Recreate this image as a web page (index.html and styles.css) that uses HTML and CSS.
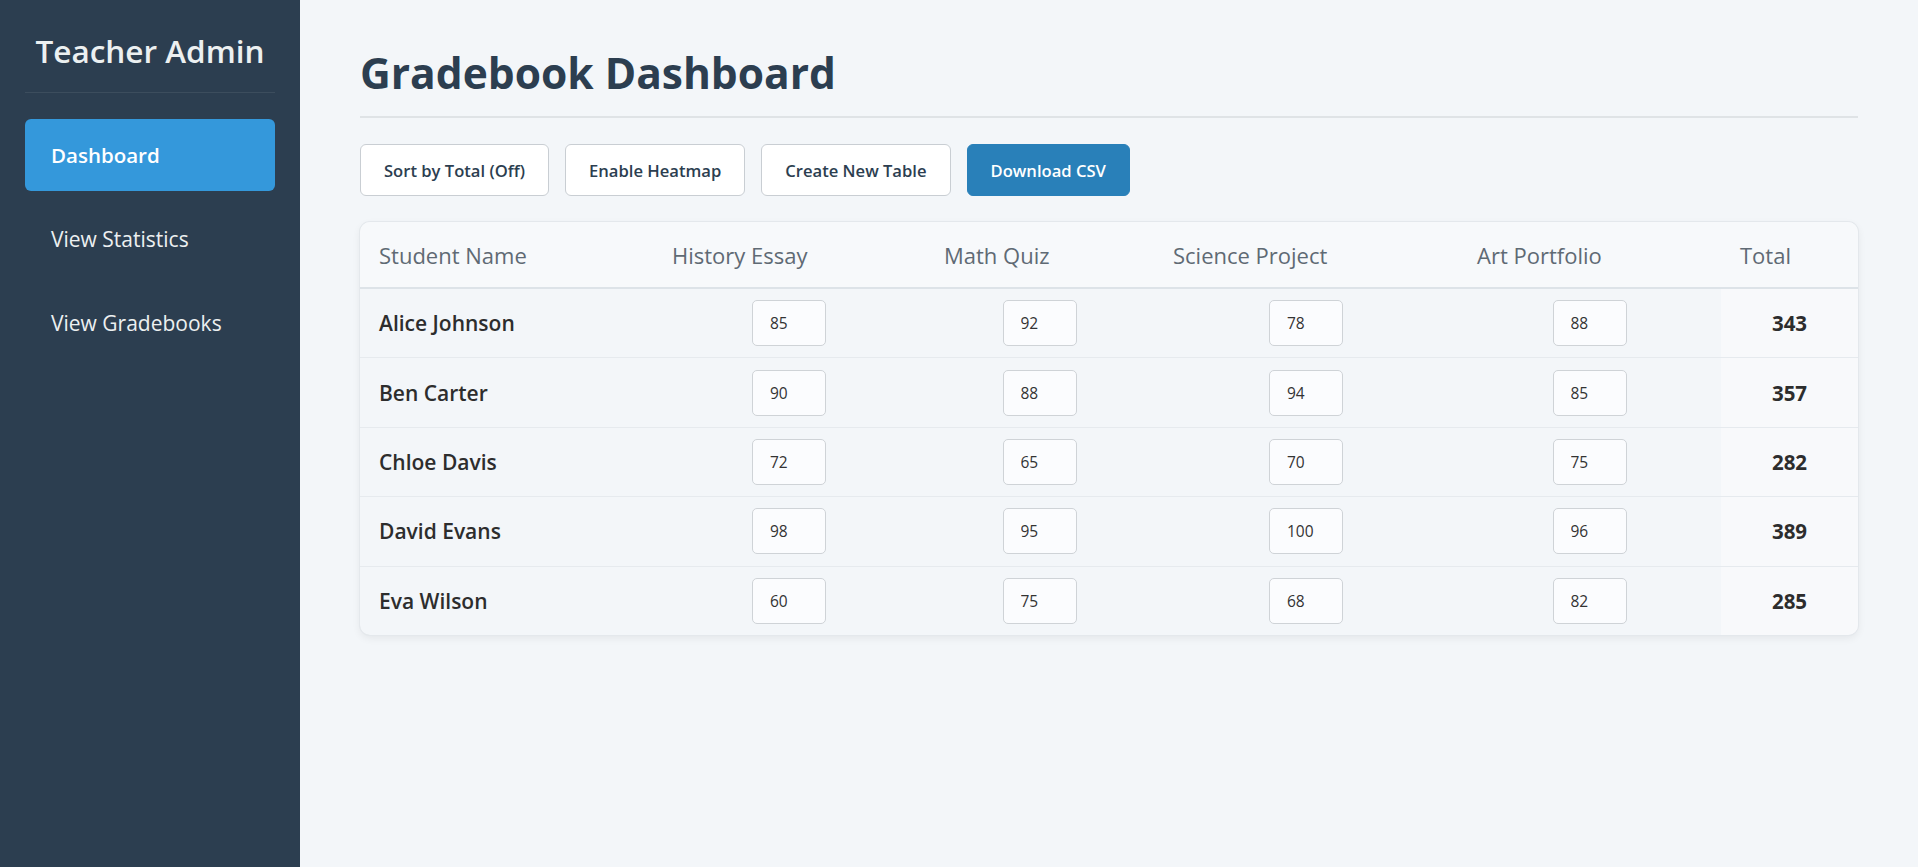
FILE: index.html
```html
<!DOCTYPE html>
<html lang="en">
<head>
<meta charset="utf-8">
<title>Gradebook Dashboard</title>
<link rel="stylesheet" href="styles.css">
</head>
<body>
<div class="layout">
  <aside class="sidebar">
    <h2 class="brand">Teacher Admin</h2>
    <nav class="nav">
      <a class="nav-item active" href="#">Dashboard</a>
      <a class="nav-item" href="#">View Statistics</a>
      <a class="nav-item" href="#">View Gradebooks</a>
    </nav>
  </aside>
  <main class="main">
    <h1 class="page-title">Gradebook Dashboard</h1>
    <div class="toolbar">
      <button class="btn">Sort by Total (Off)</button>
      <button class="btn">Enable Heatmap</button>
      <button class="btn">Create New Table</button>
      <button class="btn btn-primary">Download CSV</button>
    </div>
    <div class="card">
      <table class="grades">
        <colgroup>
          <col class="c-name"><col class="c-hist"><col class="c-math"><col class="c-sci"><col class="c-art"><col class="c-total">
        </colgroup>
        <thead>
          <tr><th>Student Name</th><th>History Essay</th><th>Math Quiz</th><th>Science Project</th><th>Art Portfolio</th><th>Total</th></tr>
        </thead>
        <tbody>
          <tr><td class="name">Alice Johnson</td><td><input class="score" value="85"></td><td><input class="score" value="92"></td><td><input class="score" value="78"></td><td><input class="score" value="88"></td><td class="total">343</td></tr>
          <tr><td class="name">Ben Carter</td><td><input class="score" value="90"></td><td><input class="score" value="88"></td><td><input class="score" value="94"></td><td><input class="score" value="85"></td><td class="total">357</td></tr>
          <tr><td class="name">Chloe Davis</td><td><input class="score" value="72"></td><td><input class="score" value="65"></td><td><input class="score" value="70"></td><td><input class="score" value="75"></td><td class="total">282</td></tr>
          <tr><td class="name">David Evans</td><td><input class="score" value="98"></td><td><input class="score" value="95"></td><td><input class="score" value="100"></td><td><input class="score" value="96"></td><td class="total">389</td></tr>
          <tr><td class="name">Eva Wilson</td><td><input class="score" value="60"></td><td><input class="score" value="75"></td><td><input class="score" value="68"></td><td><input class="score" value="82"></td><td class="total">285</td></tr>
        </tbody>
      </table>
    </div>
  </main>
</div>
</body>
</html>
```

FILE: styles.css
```css
* { box-sizing: border-box; }
html, body { margin: 0; padding: 0; height: 100%; }
body {
  font-family: "Open Sans", "Noto Sans", sans-serif;
  background: #f3f6f9;
  color: #333;
}
.layout { display: flex; min-height: 100vh; }

.sidebar {
  width: 300px;
  flex: 0 0 300px;
  background: #2c3e50;
  padding: 30px 25px;
  color: #ecf0f1;
}
.brand {
  margin: 0;
  font-size: 31.5px;
  line-height: 42px;
  font-weight: 600;
  text-align: center;
  padding-bottom: 20px;
  border-bottom: 1px solid rgba(255,255,255,0.08);
}
.nav { display: flex; flex-direction: column; gap: 12px; margin-top: 26px; }
.nav-item {
  display: flex;
  align-items: center;
  height: 72px;
  padding-left: 26px;
  border-radius: 6px;
  color: #ecf0f1;
  text-decoration: none;
  font-size: 21px;
}
.nav-item.active { background: #3498db; color: #fff; font-weight: 600; font-size: 20.5px; }

.main { flex: 1; padding: 48px 60px; min-width: 0; }
.page-title {
  margin: 0;
  font-size: 42.5px;
  line-height: 50px;
  font-weight: 700;
  color: #2c3e50;
  padding-bottom: 18px;
  border-bottom: 2px solid #dfe3e6;
}
.toolbar { display: flex; gap: 16px; margin-top: 26px; }
.btn {
  height: 52px;
  padding: 0 23px;
  font-family: inherit;
  font-size: 16.6px;
  font-weight: 600;
  color: #2c3e50;
  background: #fff;
  border: 1px solid #c9ced3;
  border-radius: 6px;
}
.btn-primary { background: #2980b9; border-color: #2980b9; color: #fff; }

.card {
  margin-top: 26px;
  border-radius: 10px;
  overflow: hidden;
  box-shadow: 0 0 0 1px #e4e8ec, 0 3px 8px rgba(0,0,0,0.07);
}
.grades { width: 100%; border-collapse: collapse; table-layout: fixed; }
.c-name { width: 293px; }
.c-hist { width: 272px; }
.c-math { width: 229px; }
.c-sci { width: 304px; }
.c-art { width: 263px; }
.c-total { width: 137px; }

.grades th {
  height: 66px;
  padding: 0 19px;
  text-align: left;
  font-size: 22px;
  font-weight: 500;
  color: #5f6a74;
  background: #f7f9fb;
  border-bottom: 2px solid #dde3e8;
}
.grades td {
  padding: 11.2px 19px;
  text-align: center;
  border-bottom: 1px solid #e6eaee;
}
.grades tbody tr:last-child td { border-bottom: none; }
.grades td.name {
  text-align: left;
  font-size: 21px;
  font-weight: 600;
  color: #2d2d2d;
}
.grades td.total {
  background: #f8f9fb;
  font-size: 20.5px;
  font-weight: 700;
  color: #2d2d2d;
}
.score {
  width: 74px;
  height: 46px;
  padding: 0 0 0 17px;
  font-family: inherit;
  font-size: 15.5px;
  color: #333;
  background: #fbfcfe;
  border: 1px solid #cfd3d7;
  border-radius: 5px;
  vertical-align: middle;
}
```
